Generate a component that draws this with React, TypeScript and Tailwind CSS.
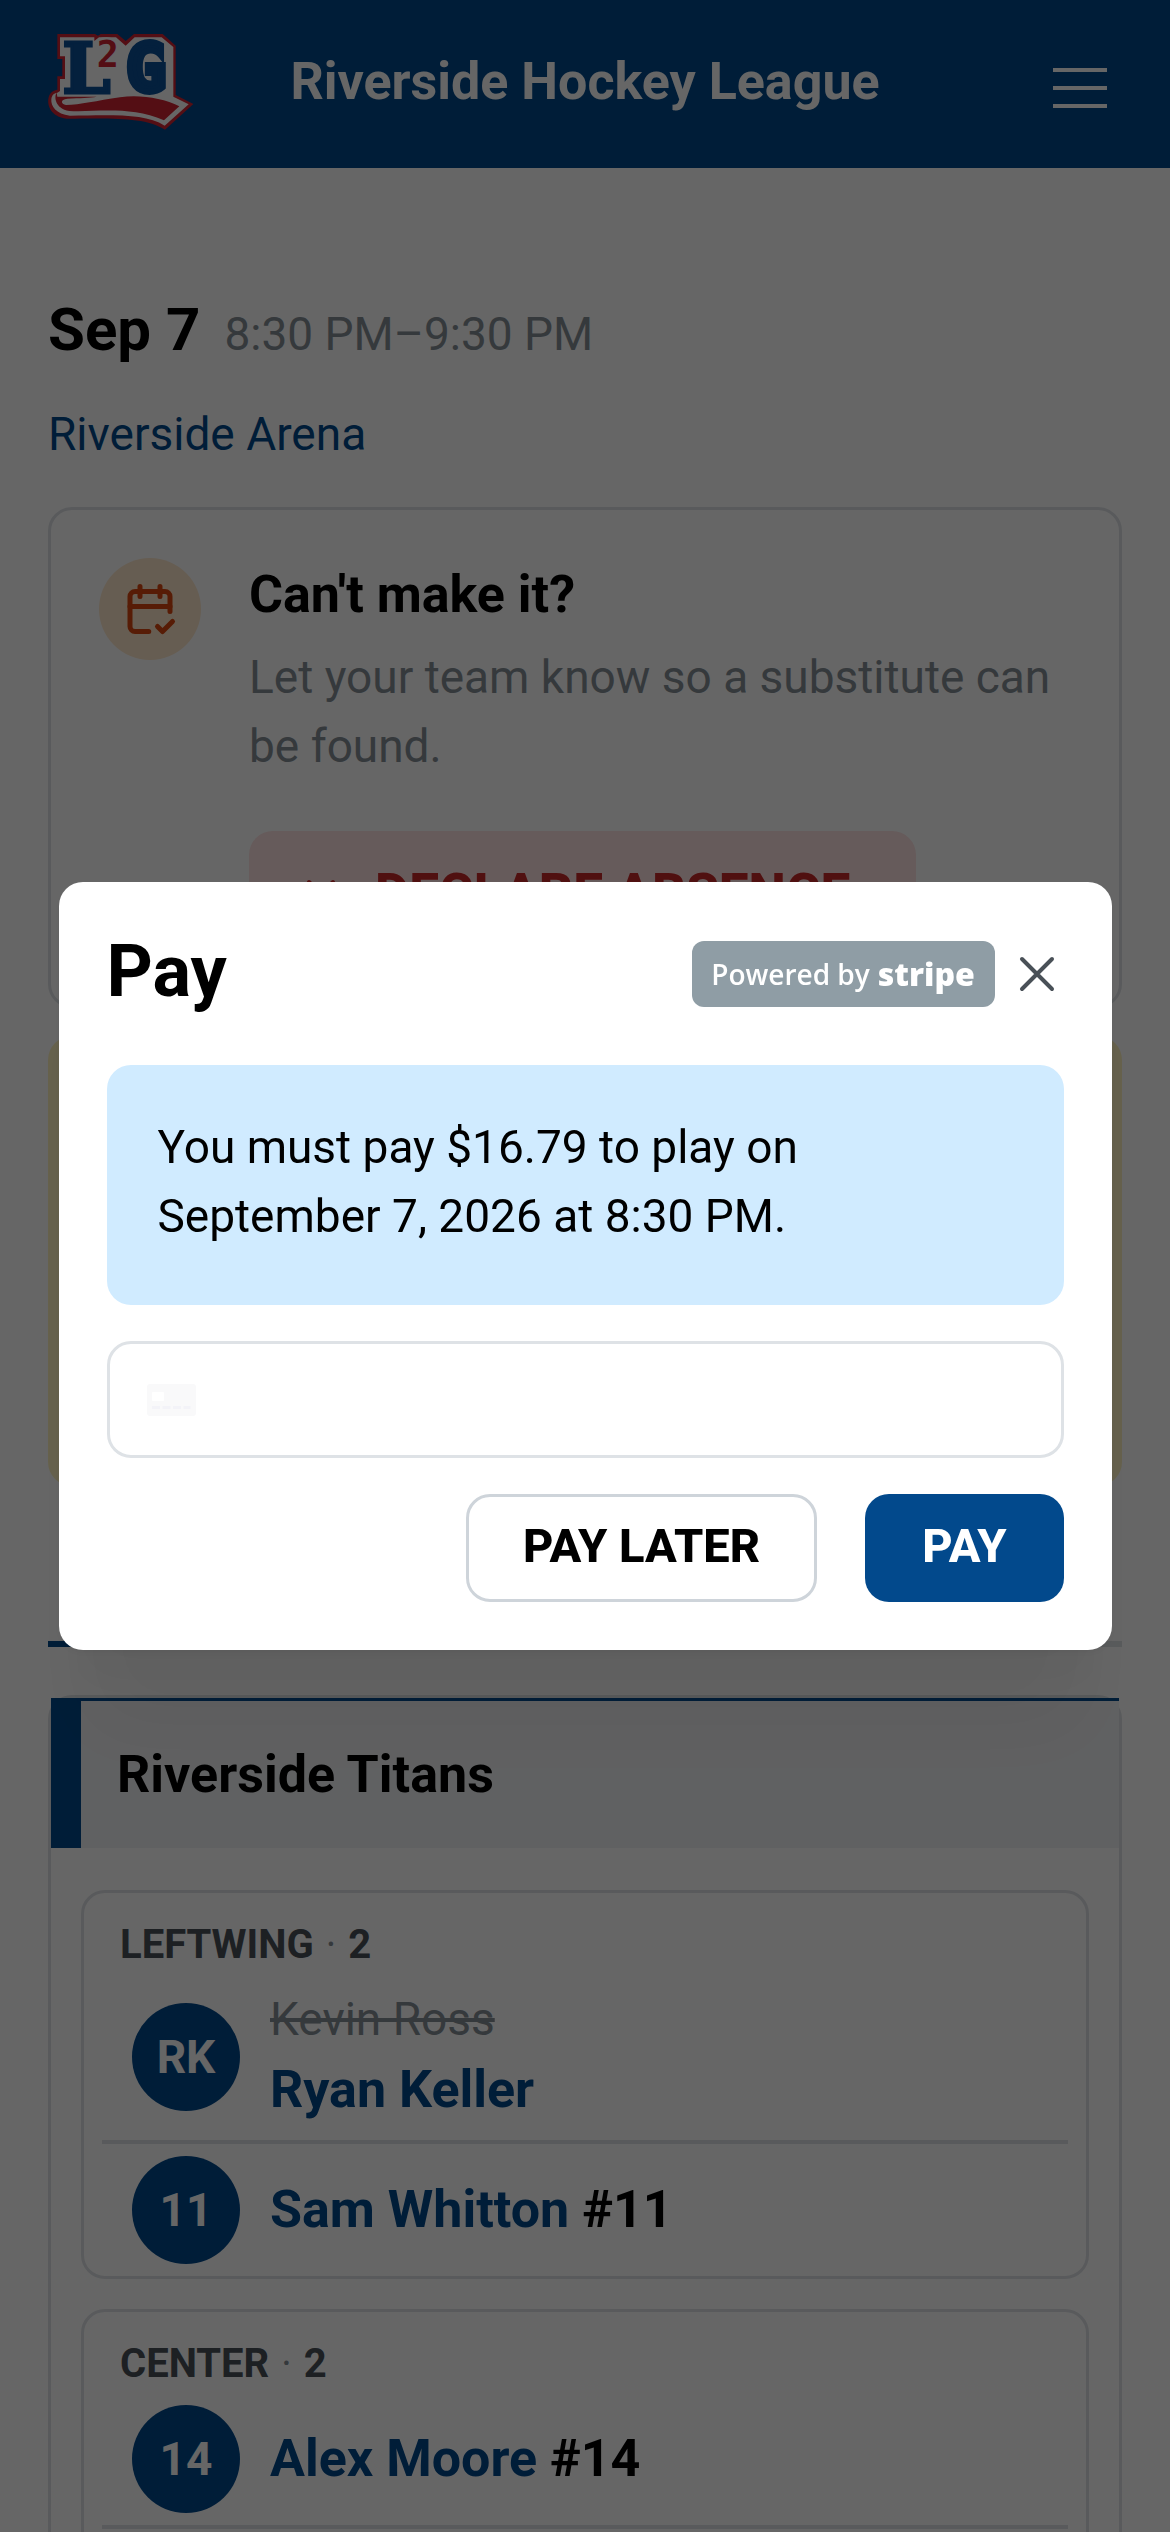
import { useState } from 'react'

type Player = {
  badge: string
  name: string
  number?: string
  replaces?: string
}

const groups: { position: string; count: number; players: Player[] }[] = [
  {
    position: 'LEFTWING',
    count: 2,
    players: [
      { badge: 'RK', name: 'Ryan Keller', replaces: 'Kevin Ross' },
      { badge: '11', name: 'Sam Whitton', number: '#11' },
    ],
  },
  {
    position: 'CENTER',
    count: 2,
    players: [{ badge: '14', name: 'Alex Moore', number: '#14' }],
  },
]

function Logo() {
  return (
    <svg viewBox="54 45 438 288" className="w-[146px] h-24 overflow-visible" role="img" aria-label="L2G">
      <path
        fill="#d22332"
        d="M82 45H195L204 50L212 45H262L287 66L312 45H398L437 80V228L490 255L405 332C345 294 250 298 110 299C62 294 50 258 56 235C60 218 72 214 82 212V172H97V120H82Z"
      />
      <path
        fill="#fff"
        d="M90 55H193V66L207 55H258L287 80L314 55H395L430 84V233L476 256L404 320C345 283 250 289 120 290C78 285 62 262 64 240C66 226 74 222 82 221L90 216V180H105V112H90Z"
      />
      <path
        fill="#d22332"
        d="M80 221C72 232 74 268 118 276C200 280 300 260 402 304L448 262C400 238 330 226 270 235C200 245 150 258 108 258C92 255 90 241 112 239C150 237 180 237 200 233H82Z"
      />
      <g fill="#0a5099" stroke="#0a5099" strokeLinejoin="miter">
        <text x="97" y="221" fontSize="206" fontWeight="700" strokeWidth="9" fontFamily="DejaVu Serif, serif">L</text>
        <text x="288" y="217" fontSize="200" fontWeight="700" strokeWidth="18" fontFamily="DejaVu Sans Mono, monospace">G</text>
      </g>
      <text x="200" y="144" fontSize="110" fontWeight="700" fill="#d22332" stroke="#fff" strokeWidth="14" paintOrder="stroke" fontFamily="DejaVu Sans Mono, monospace">2</text>
    </svg>
  )
}

function CalendarCheck() {
  return (
    <svg viewBox="0 0 24 24" className="size-[60px]" fill="none" stroke="#d9480f" strokeWidth="2" strokeLinecap="round" strokeLinejoin="round">
      <path d="M11.5 21h-5.5a2 2 0 0 1 -2 -2v-12a2 2 0 0 1 2 -2h12a2 2 0 0 1 2 2v6" />
      <path d="M16 3v4M8 3v4M4 11h16M15 19l2 2l4 -4" />
    </svg>
  )
}

function PlayerRow({ player }: { player: Player }) {
  return (
    <li className="flex items-center gap-[30px] px-[30px] py-3 border-b-4 border-[#dee2e6] last:border-b-0">
      <div className="size-[108px] shrink-0 rounded-full bg-[#02498c] flex items-center justify-center text-white text-[46px] font-bold">
        {player.badge}
      </div>
      <div className="flex flex-col">
        {player.replaces && <s className="text-[46px] leading-[66px] text-[#868e96]">{player.replaces}</s>}
        <div className="text-[52px] leading-[76px] font-bold">
          <a href="#" className="text-[#02498c]">{player.name}</a>
          {player.number && <span> {player.number}</span>}
        </div>
      </div>
    </li>
  )
}

function PayDialog({ onClose }: { onClose: () => void }) {
  return (
    <div className="fixed inset-0 bg-black/60 flex items-center justify-center">
      <div
        role="dialog"
        aria-modal="true"
        aria-labelledby="pay-title"
        className="w-[90%] p-12 bg-white rounded-3xl shadow-[0_3px_9px_rgba(0,0,0,0.05),0_108px_84px_-21px_rgba(0,0,0,0.05),0_51px_51px_-21px_rgba(0,0,0,0.04)]"
      >
        <div className="flex items-center h-[87px]">
          <h2 id="pay-title" className="pb-1 text-[72px] leading-[87px] font-bold">Pay</h2>
          <div className="ml-auto w-[303px] h-[66px] rounded-xl bg-[#8f9da5] text-white flex items-center justify-center gap-2 font-['Open_Sans',sans-serif]">
            <span className="text-[28px] font-semibold">Powered by</span>
            <span className="text-[32px] font-extrabold">stripe</span>
          </div>
          <button type="button" aria-label="Close" onClick={onClose} className="ml-[15px] size-[54px] flex items-center justify-center">
            <svg viewBox="0 0 36 36" className="size-9" stroke="#495057" strokeWidth="4" strokeLinecap="round">
              <path d="M3 3L33 33M33 3L3 33" />
            </svg>
          </button>
        </div>

        <div className="mt-12 h-60 px-[51px] py-12 rounded-3xl bg-[#d0ebff] text-[46px] leading-[69px]">
          <p className="max-w-[720px]">You must pay $16.79 to play on September 7, 2026 at 8:30 PM.</p>
        </div>

        <form onSubmit={(e) => e.preventDefault()}>
          <label className="mt-9 h-[117px] px-[37px] flex items-center gap-6 border-3 border-[#dee2e6] rounded-3xl">
            <svg viewBox="0 0 49 32" className="w-[49px] h-8 shrink-0">
              <rect width="49" height="32" rx="3" fill="#f9f9fa" />
              <rect x="5" y="8" width="12" height="9" rx="1" fill="#fff" />
              <path d="M5 23.5h8M15.500 23.500h8M26 23.500h8M36.500 23.500h7" stroke="#f3f3f8" strokeWidth="3" />
            </svg>
            <input aria-label="Card number" className="flex-1 min-w-0 text-[46px] outline-none" />
          </label>
          <div className="mt-9 flex justify-end gap-12">
            <button type="button" onClick={onClose} className="h-[108px] px-[54px] pb-1 border-3 border-[#ced4da] rounded-3xl text-[47px] font-extrabold">
              PAY LATER
            </button>
            <button type="submit" className="h-[108px] px-[57px] pb-1 rounded-3xl bg-[#02498c] text-white text-[47px] font-extrabold">
              PAY
            </button>
          </div>
        </form>
      </div>
    </div>
  )
}

function App() {
  const [payOpen, setPayOpen] = useState(true)

  return (
    <div className="h-screen overflow-hidden bg-white text-black font-[Roboto,sans-serif]">
      <header className="h-42 px-12 pb-1 grid grid-cols-[1fr_auto_1fr] items-center bg-[#02498c] text-white">
        <a href="#"><Logo /></a>
        <h1 className="text-[52px] font-bold">Riverside Hockey League</h1>
        <button type="button" aria-label="Menu" className="justify-self-end mt-3 px-[15px] flex flex-col gap-[14px]">
          <span className="w-[54px] h-1 bg-white" />
          <span className="w-[54px] h-1 bg-white" />
          <span className="w-[54px] h-1 bg-white" />
        </button>
      </header>

      <main className="px-12 pt-[117px]">
        <div className="flex items-baseline gap-6">
          <h2 className="text-[60px] leading-[90px] font-bold">Sep 7</h2>
          <span className="text-[46px] text-[#868e96]">8:30 PM–9:30 PM</span>
        </div>
        <a href="#" className="block mt-6 text-[46px] leading-[70px] text-[#02498c]">Riverside Arena</a>

        <section className="mt-[38px] p-12 flex items-start gap-12 border-3 border-[#dee2e6] rounded-3xl">
          <div className="size-[102px] shrink-0 rounded-full bg-[#ffe8cc] flex items-center justify-center">
            <CalendarCheck />
          </div>
          <div>
            <h3 className="text-[52px] leading-[73px] font-bold">Can't make it?</h3>
            <p className="mt-3 text-[46px] leading-[69px] text-[#868e96]">Let your team know so a substitute can be found.</p>
            <button type="button" className="mt-[50px] h-[126px] pl-12 pr-[66px] flex items-center gap-[30px] rounded-3xl bg-[#ffe3e3] text-[#c92a2a] text-[53px] font-extrabold">
              <svg viewBox="0 0 24 24" className="size-12" fill="none" stroke="currentColor" strokeWidth="2" strokeLinecap="round">
                <path d="M18 6L6 18M6 6l12 12" />
              </svg>
              DECLARE ABSENCE
            </button>
          </div>
        </section>

        <section className="mt-7 h-[450px] rounded-3xl bg-[#fff3bf]" />

        <nav className="mt-[30px] h-[131px] flex">
          <div className="flex-1 border-b-6 border-[#02498c]" />
          <div className="flex-1 border-b-6 border-[#dee2e6]" />
        </nav>

        <section className="mt-12 border-3 border-[#dee2e6] rounded-3xl">
          <h3 className="h-[150px] pl-9 flex items-center border-t-3 border-l-30 border-[#02498c] bg-[#f1f3f5] text-[52px] font-bold">
            Riverside Titans
          </h3>
          <div className="px-[30px] py-[42px] flex flex-col gap-[30px]">
            {groups.map((group) => (
              <div key={group.position} className="px-[18px] border-3 border-[#dee2e6] rounded-3xl">
                <h4 className="pt-[23px] pl-[18px] flex gap-3 text-[40px] leading-[58px] font-bold text-[#495057]">
                  <span>{group.position}</span>
                  <span className="font-normal text-[#868e96]">·</span>
                  <span>{group.count}</span>
                </h4>
                <ul>
                  {group.players.map((player) => (
                    <PlayerRow key={player.name} player={player} />
                  ))}
                  {/* open spot */}
                  {group.players.length < group.count && <li className="h-[132px]" />}
                </ul>
              </div>
            ))}
          </div>
        </section>
      </main>

      {payOpen && <PayDialog onClose={() => setPayOpen(false)} />}
    </div>
  )
}

export default App
